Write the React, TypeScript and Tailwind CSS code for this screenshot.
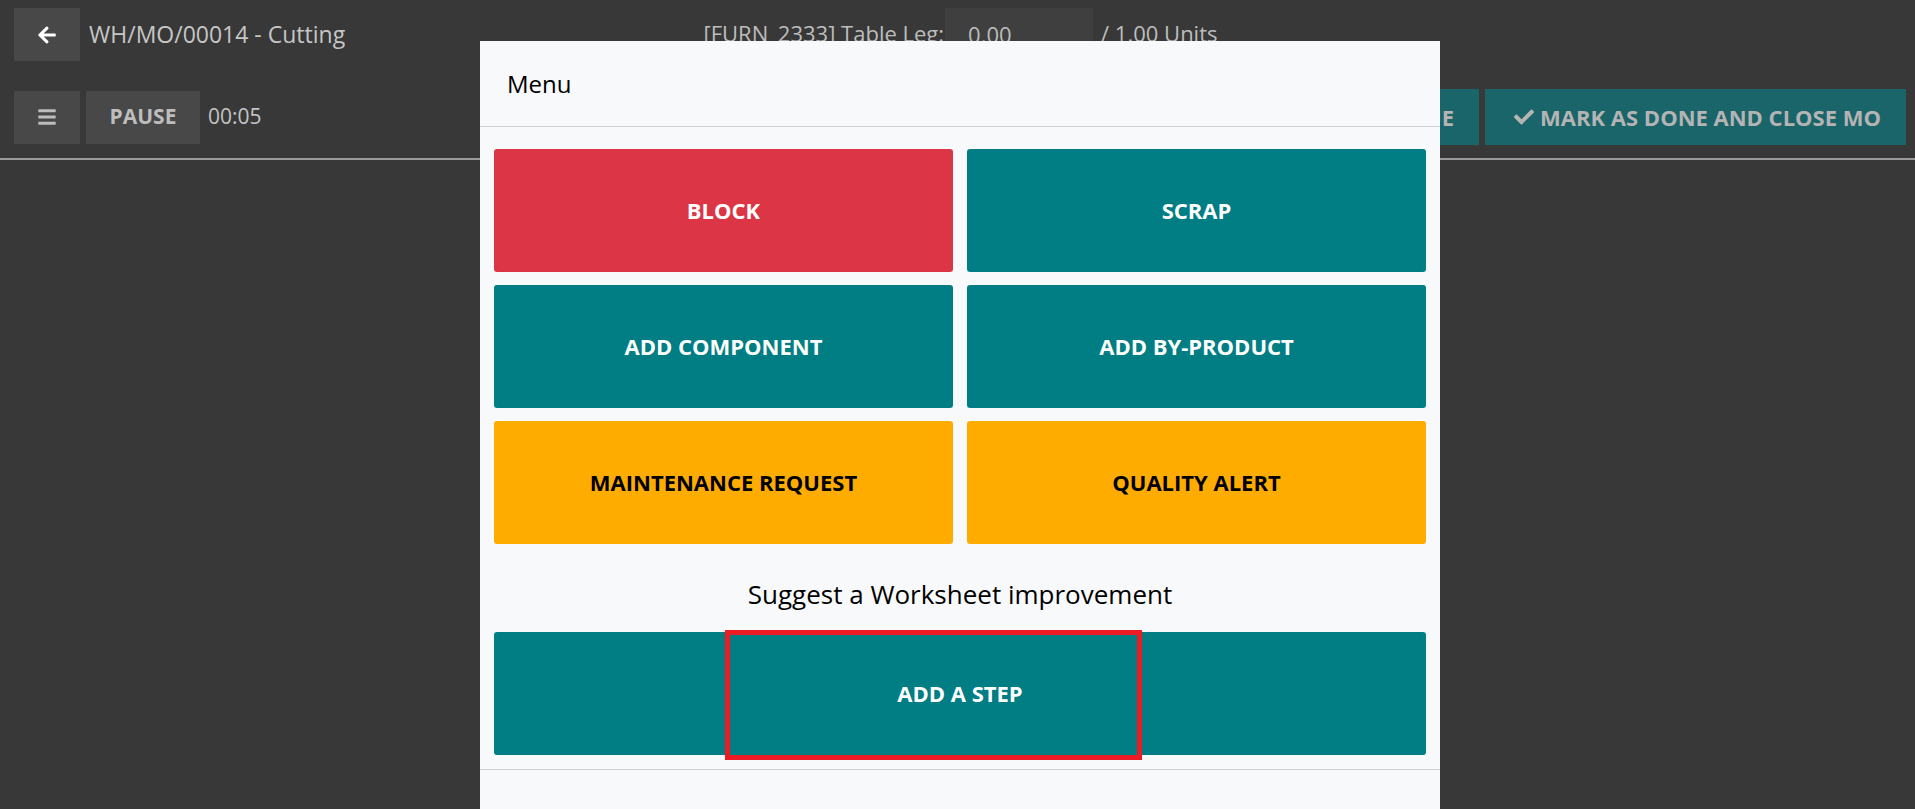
import React from "react";
import { FaArrowLeft, FaBars, FaCheck } from "react-icons/fa";

type Action = { label: string; tone: "danger" | "primary" | "warning" };

const actions: Action[] = [
  { label: "Block", tone: "danger" },
  { label: "Scrap", tone: "primary" },
  { label: "Add Component", tone: "primary" },
  { label: "Add By-Product", tone: "primary" },
  { label: "Maintenance Request", tone: "warning" },
  { label: "Quality Alert", tone: "warning" },
];

const toneClass: Record<Action["tone"], string> = {
  danger: "bg-[#dc3545] text-white",
  primary: "bg-[#017e84] text-white",
  warning: "bg-[#ffac00] text-black",
};

function ActionButton({ action }: { action: Action }) {
  return (
    <button
      className={`flex h-[123px] items-center justify-center rounded-[3px] text-[22px] font-bold uppercase ${toneClass[action.tone]}`}
    >
      {action.label}
    </button>
  );
}

export default function App() {
  return (
    <div className="relative h-[809px] w-[1915px] overflow-hidden bg-[#383838] font-['Open_Sans',sans-serif] text-[#c4c4c4]">
      {/* Work order control panel */}
      <div className="grid h-[61px] grid-cols-[1fr_auto_1fr] items-start pl-[14px] pr-[8px] pt-[8px]">
        <div className="flex items-center">
          <button className="flex h-[53px] w-[66px] items-center justify-center bg-[#484848] text-white">
            <FaArrowLeft className="h-[20px] w-[20px]" />
          </button>
          <span className="ml-[9px] text-[23px] leading-none text-[#c6c6c6]">WH/MO/00014 - Cutting</span>
        </div>
        <div className="flex items-center text-[22px] leading-none text-[#bdbdbd]">
          <span>[FURN_2333] Table Leg:</span>
          <div className="ml-[1px] flex h-[50px] w-[148px] items-center bg-[#3f3f3f] pl-[23px] pt-[1px]">0.00</div>
          <span className="ml-[8px]">/ 1.00 Units</span>
        </div>
        <div />
      </div>

      <div className="mt-[28px] flex items-center border-b-[2px] border-[#9a9a9a] pb-[13px] pl-[14px] pr-[9px]">
        <button className="flex h-[53px] w-[66px] items-center justify-center bg-[#484848] text-[#bcbcbc]">
          <FaBars className="h-[20px] w-[20px]" />
        </button>
        <button className="ml-[6px] h-[53px] w-[114px] bg-[#484848] text-[21px] font-bold text-[#bdbdbd]">PAUSE</button>
        <span className="ml-[8px] text-[21px] text-[#c4c4c4]">00:05</span>
        <div className="ml-auto flex items-center gap-[6px]">
          <button className="flex h-[56px] items-center bg-[#1a6569] pl-[28px] pr-[25px] text-[22px] font-bold text-[#b4b4b4]">
            CONTINUE
          </button>
          <button className="flex h-[56px] items-center gap-[6px] bg-[#1a6569] pl-[29px] pr-[25px] text-[22px] font-bold text-[#b4b4b4]">
            <FaCheck className="h-[20px] w-[20px]" />
            MARK AS DONE AND CLOSE MO
          </button>
        </div>
      </div>

      {/* Menu dialog */}
      <div className="absolute left-[480px] top-[41px] bottom-[-60px] flex w-[960px] flex-col bg-[#f8f9fa] text-black">
        <div className="flex h-[86px] items-center border-b border-[#cfd0d8] px-[27px] text-[24px]">Menu</div>
        <div className="px-[14px] pt-[22px] pb-[14px]">
          <div className="grid grid-cols-2 gap-x-[14px] gap-y-[13px]">
            {actions.map((a) => (
              <ActionButton key={a.label} action={a} />
            ))}
          </div>
          <h4 className="mt-[32px] text-center text-[26px] font-medium leading-[36px] text-black">
            Suggest a Worksheet improvement
          </h4>
          <div className="relative mt-[20px]">
            <button className="flex h-[123px] w-full items-center justify-center rounded-[3px] bg-[#017e84] text-[22px] font-bold text-white">
              ADD A STEP
            </button>
            <div className="pointer-events-none absolute left-[231px] top-[-2px] h-[130px] w-[417px] border-[5px] border-[#ed1c24]" />
          </div>
        </div>
        <div className="border-t border-[#cfd0d4]" />
      </div>
    </div>
  );
}
